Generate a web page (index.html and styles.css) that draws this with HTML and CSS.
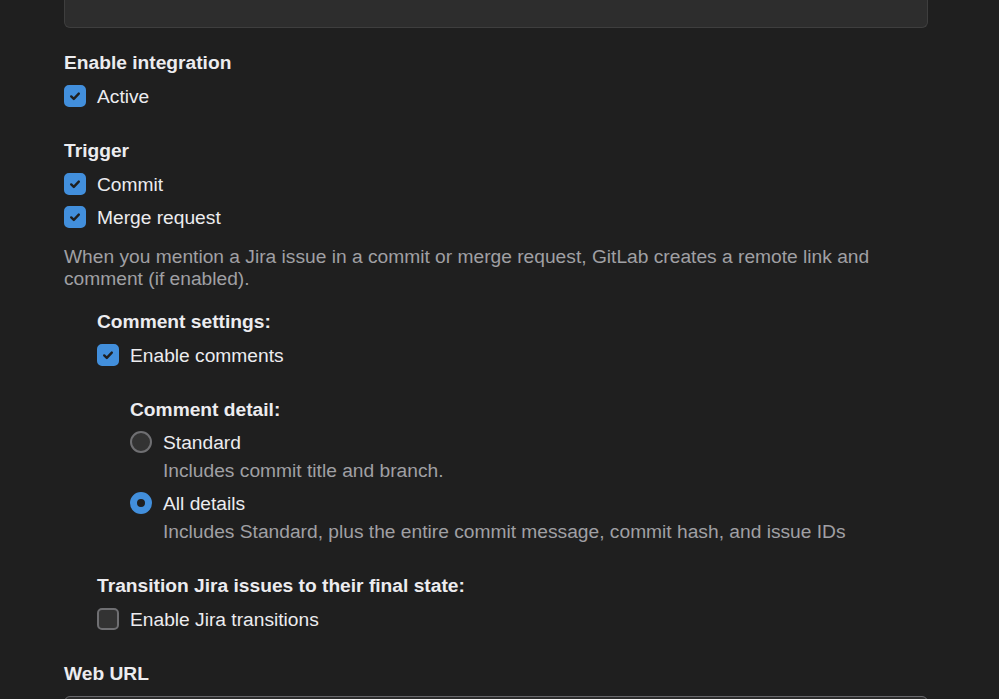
FILE: index.html
```html
<!DOCTYPE html>
<html lang="en">
<head>
<meta charset="utf-8">
<title>Jira integration</title>
<link rel="stylesheet" href="styles.css">
</head>
<body>
<div class="page">
  <div class="textarea-top"></div>

  <h3 class="label first">Enable integration</h3>
  <label class="check-row">
    <span class="box checked"><svg viewBox="0 0 16 16" width="16" height="16"><path d="M4.2 8.4l2.6 2.5L11.8 5.6" fill="none" stroke="#1f1f1f" stroke-width="2.4" stroke-linecap="round" stroke-linejoin="round"/></svg></span>
    <span class="text">Active</span>
  </label>

  <h3 class="label section">Trigger</h3>
  <label class="check-row">
    <span class="box checked"><svg viewBox="0 0 16 16" width="16" height="16"><path d="M4.2 8.4l2.6 2.5L11.8 5.6" fill="none" stroke="#1f1f1f" stroke-width="2.4" stroke-linecap="round" stroke-linejoin="round"/></svg></span>
    <span class="text">Commit</span>
  </label>
  <label class="check-row">
    <span class="box checked"><svg viewBox="0 0 16 16" width="16" height="16"><path d="M4.2 8.4l2.6 2.5L11.8 5.6" fill="none" stroke="#1f1f1f" stroke-width="2.4" stroke-linecap="round" stroke-linejoin="round"/></svg></span>
    <span class="text">Merge request</span>
  </label>
  <p class="desc">When you mention a Jira issue in a commit or merge request, GitLab creates a remote link and comment (if enabled).</p>

  <div class="indent comment-settings">
    <h3 class="label">Comment settings:</h3>
    <label class="check-row">
      <span class="box checked"><svg viewBox="0 0 16 16" width="16" height="16"><path d="M4.2 8.4l2.6 2.5L11.8 5.6" fill="none" stroke="#1f1f1f" stroke-width="2.4" stroke-linecap="round" stroke-linejoin="round"/></svg></span>
      <span class="text">Enable comments</span>
    </label>

    <div class="indent comment-detail">
      <h3 class="label">Comment detail:</h3>
      <label class="radio-row">
        <span class="radio"></span>
        <span class="text">Standard</span>
      </label>
      <p class="help">Includes commit title and branch.</p>
      <label class="radio-row">
        <span class="radio checked"></span>
        <span class="text">All details</span>
      </label>
      <p class="help">Includes Standard, plus the entire commit message, commit hash, and issue IDs</p>
    </div>

    <h3 class="label section transition">Transition Jira issues to their final state:</h3>
    <label class="check-row">
      <span class="box"></span>
      <span class="text">Enable Jira transitions</span>
    </label>
  </div>

  <h3 class="label section">Web URL</h3>
  <div class="input-bottom"></div>
</div>
</body>
</html>
```

FILE: styles.css
```css
html, body {
  margin: 0;
  padding: 0;
  background: #1f1f1f;
  height: 100%;
  overflow: hidden;
}

body {
  font-family: "Liberation Sans", Arial, sans-serif;
  font-size: 19.2px;
  line-height: 22px;
  color: #ececef;
}

.page {
  width: 864px;
  padding-left: 64px;
}

.textarea-top {
  height: 27px;
  background: #2d2d2d;
  border: 1px solid #3e3e3e;
  border-top: none;
  border-radius: 0 0 6px 6px;
}

.label {
  margin: 0;
  font-size: 19.2px;
  font-weight: bold;
  line-height: 22px;
  color: #ececef;
}

.label.first {
  margin-top: 24px;
}

.label.section {
  margin-top: 33px;
}

.label.transition {
  margin-top: 32px;
}

.check-row,
.radio-row {
  display: flex;
  align-items: center;
  gap: 11px;
  height: 22px;
  margin-top: 11px;
}

.radio-row {
  margin-top: 10px;
}

.box {
  width: 22px;
  height: 22px;
  box-sizing: border-box;
  border-radius: 5px;
  background: #333333;
  border: 2px solid #6f6f72;
  display: flex;
  align-items: center;
  justify-content: center;
  flex-shrink: 0;
}

.box.checked {
  background: #428fdc;
  border-color: #428fdc;
}

.radio {
  width: 22px;
  height: 22px;
  box-sizing: border-box;
  border-radius: 50%;
  background: #333333;
  border: 2px solid #6f6f72;
  flex-shrink: 0;
}

.radio.checked {
  background: #1f1f1f;
  border: 7px solid #428fdc;
}

.text {
  color: #ececef;
  padding-top: 2px;
}

.desc {
  margin: 18px 0 0;
  color: #a0a0a4;
  line-height: 22px;
}

.indent {
  padding-left: 33px;
}

.comment-settings {
  margin-top: 21px;
}

.comment-detail {
  margin-top: 33px;
}

.help {
  margin: 7px 0 0;
  padding-left: 33px;
  color: #a0a0a4;
}

.input-bottom {
  margin-top: 11px;
  height: 30px;
  background: #2d2d2d;
  border: 1px solid #6a6a6e;
  border-radius: 6px;
}
```
